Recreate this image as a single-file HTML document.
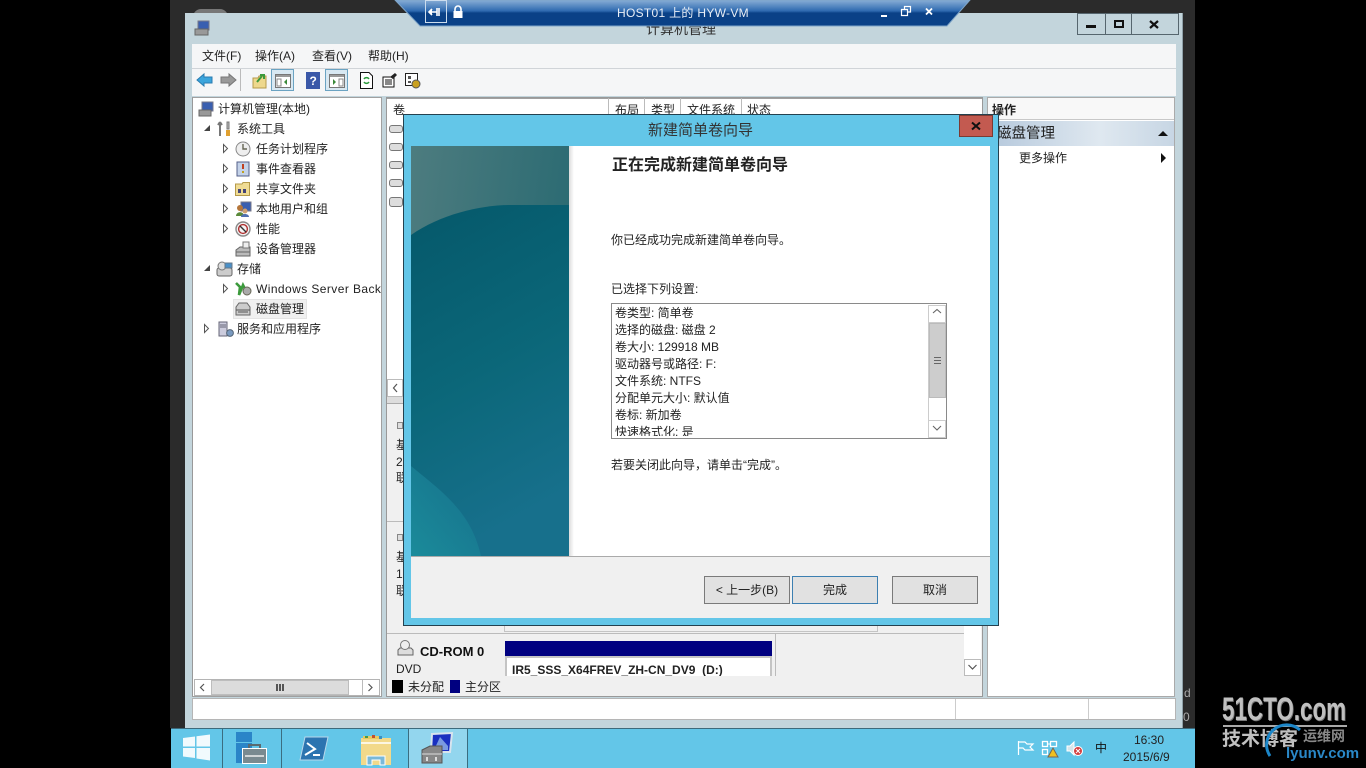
<!DOCTYPE html>
<html><head><meta charset="utf-8"><style>
html,body{margin:0;padding:0;background:#000;width:1366px;height:768px;overflow:hidden}
body{position:relative;font-family:"Liberation Sans","Noto Sans CJK SC",sans-serif;font-size:12px;color:#222}
.a{position:absolute}
.t{position:absolute;white-space:nowrap;line-height:16px;height:16px}
svg{position:absolute;overflow:visible}
.btn{position:absolute;top:576px;height:28px;line-height:26px;text-align:center;background:#e1e1e1;border:1px solid #7a7a7a;box-sizing:border-box}
.tri{position:absolute;width:0;height:0}
</style></head><body>
<div class="a" style="left:170px;top:0;width:1025px;height:728px;background:#2b2b2b"></div>
<div class="a" style="left:193px;top:9px;width:35px;height:8px;background:#777;border-radius:8px 8px 0 0"></div>
<div class="a" style="left:185px;top:13px;width:998px;height:715px;background:#c3d5dc"></div>
<div class="a" style="left:1182px;top:13px;width:1px;height:715px;background:#8fa0a8"></div>
<div class="t" style="left:646px;top:21px;font-size:14px;color:#333">计算机管理</div>
<svg style="left:194px;top:20px" width="17" height="17"><rect x="4" y="1" width="11" height="9" fill="#3a5fb0" stroke="#778"/><rect x="1" y="9" width="13" height="6" fill="#999" stroke="#666"/></svg>
<div class="a" style="left:1077px;top:13px;width:102px;height:22px;border:1px solid #56666e;box-sizing:border-box"></div>
<div class="a" style="left:1105px;top:13px;width:1px;height:22px;background:#56666e"></div>
<div class="a" style="left:1131px;top:13px;width:1px;height:22px;background:#56666e"></div>
<div class="a" style="left:1086px;top:25px;width:10px;height:3px;background:#111"></div>
<div class="a" style="left:1114px;top:20px;width:10px;height:8px;border:2px solid #111;box-sizing:border-box"></div>
<svg style="left:1149px;top:20px" width="10" height="9"><path d="M1 1L9 8M9 1L1 8" stroke="#111" stroke-width="2.200"/></svg>

<div class="a" style="left:192px;top:44px;width:984px;height:24px;background:#f5f6f7"></div>
<div class="a" style="left:192px;top:68px;width:984px;height:1px;background:#d0d4d8"></div>
<div class="a" style="left:192px;top:69px;width:984px;height:27px;background:#f5f6f7"></div>
<div class="t" style="left:202px;top:48px">文件(F)</div>
<div class="t" style="left:255px;top:48px">操作(A)</div>
<div class="t" style="left:312px;top:48px">查看(V)</div>
<div class="t" style="left:368px;top:48px">帮助(H)</div>

<svg style="left:196px;top:72px" width="18" height="16"><path d="M1 8L8 2V5H16V11H8V14Z" fill="#3ba5dc" stroke="#2a7cb0"/></svg>
<svg style="left:219px;top:72px" width="18" height="16"><path d="M17 8L10 2V5H2V11H10V14Z" fill="#999" stroke="#777"/></svg>
<div class="a" style="left:240px;top:69px;width:1px;height:22px;background:#bbb"></div>
<svg style="left:252px;top:73px" width="15" height="16"><path d="M1 5H6L7 3H14V15H1Z" fill="#eed88c" stroke="#b59a4a"/><path d="M5 9L10 3M8 2L12 2L12 6" stroke="#3c9a3c" stroke-width="2" fill="none"/></svg>
<div class="a" style="left:271px;top:69px;width:23px;height:22px;background:#d8e8f2;border:1px solid #6ba3c2;box-sizing:border-box"></div>
<svg style="left:275px;top:74px" width="16" height="14"><rect x=".5" y=".5" width="15" height="13" fill="#fff" stroke="#777"/><rect x="1" y="1" width="14" height="2" fill="#999"/><rect x="2" y="5" width="4" height="7" fill="none" stroke="#888"/><path d="M12 5V11L9 8Z" fill="#3a8a3a"/></svg>
<svg style="left:306px;top:72px" width="14" height="17"><rect width="14" height="17" fill="#3a58a8"/><text x="3.500" y="13" fill="#fff" font-size="12" font-weight="bold" font-family="Liberation Sans">?</text></svg>
<div class="a" style="left:325px;top:69px;width:23px;height:22px;background:#d8e8f2;border:1px solid #6ba3c2;box-sizing:border-box"></div>
<svg style="left:329px;top:74px" width="16" height="14"><rect x=".5" y=".5" width="15" height="13" fill="#fff" stroke="#777"/><rect x="1" y="1" width="14" height="2" fill="#999"/><rect x="10" y="5" width="4" height="7" fill="none" stroke="#888"/><path d="M4 5V11L7 8Z" fill="#3a8a3a"/></svg>
<svg style="left:360px;top:72px" width="13" height="17"><path d="M.5.5H9L12.500 4V16.500H.5Z" fill="#fff" stroke="#111"/><path d="M4 7A3 3 0 0 1 9 7M9 10A3 3 0 0 1 4 10" stroke="#2a9a3a" stroke-width="1.500" fill="none"/></svg>
<svg style="left:382px;top:73px" width="16" height="15"><rect x="1" y="4" width="11" height="10" fill="#fff" stroke="#111"/><path d="M3 7H10M3 9H10M3 11H10" stroke="#111"/><path d="M8 4L13 0L15 2L11 6Z" fill="#222"/></svg>
<svg style="left:405px;top:73px" width="16" height="16"><rect x=".5" y=".5" width="12" height="12" fill="#fff" stroke="#222"/><path d="M3 3H6V6H3ZM3 8H6V10H3Z" fill="#555"/><circle cx="11" cy="11" r="4" fill="#c9a020" stroke="#555"/></svg>

<!-- Left tree -->
<div class="a" style="left:192px;top:97px;width:190px;height:600px;background:#fff;border:1px solid #a0a0a0;border-left-color:#999;box-sizing:border-box"></div>
<svg style="left:198px;top:101px" width="16" height="16"><rect x="4" y="1" width="11" height="9" fill="#3a5fb0" stroke="#778"/><rect x="1" y="9" width="12" height="6" fill="#999" stroke="#666"/></svg>
<div class="t" style="left:218px;top:101px">计算机管理(本地)</div>
<div class="tri" style="left:204px;top:125px;border-left:6px solid transparent;border-bottom:6px solid #444"></div>
<svg style="left:217px;top:121px" width="16" height="16"><path d="M3 1V15M3 1L1 4M3 1L5 4" stroke="#777" stroke-width="2" fill="none"/><path d="M10 1H12V8H10Z" fill="#bbb" stroke="#777"/><path d="M9 9H13V15H9Z" fill="#e0a030"/></svg>
<div class="t" style="left:237px;top:121px">系统工具</div>
<svg style="left:235px;top:141px" width="16" height="16"><circle cx="8" cy="8" r="7" fill="#eee" stroke="#888"/><path d="M8 3V8H12" stroke="#665" stroke-width="1.400" fill="none"/></svg>
<div class="t" style="left:256px;top:141px">任务计划程序</div>
<svg style="left:236px;top:161px" width="14" height="16"><rect x="1" y="1" width="12" height="14" fill="#c4d2e8" stroke="#55608a"/><path d="M7 3V8" stroke="#c04020" stroke-width="2"/><rect x="6" y="10" width="2" height="2" fill="#c0a020"/></svg>
<div class="t" style="left:256px;top:161px">事件查看器</div>
<svg style="left:235px;top:182px" width="15" height="14"><path d="M.5 2H7L8 .5H14.500V13.500H.5Z" fill="#f0dc94" stroke="#b59a4a"/><path d="M3 7h3v4H3zM8 7h3v4H8z" fill="#447"/></svg>
<div class="t" style="left:256px;top:181px">共享文件夹</div>
<svg style="left:235px;top:201px" width="16" height="16"><rect x="6" y="1" width="10" height="9" fill="#3a5fb0" stroke="#778"/><circle cx="5" cy="7" r="3" fill="#b5763a"/><path d="M1 15C1 10 9 10 9 15Z" fill="#5a8a3a"/><circle cx="10" cy="10" r="2.500" fill="#d0a070"/><path d="M6 16C6 12 14 12 14 16Z" fill="#5070b0"/></svg>
<div class="t" style="left:256px;top:201px">本地用户和组</div>
<svg style="left:235px;top:221px" width="16" height="16"><circle cx="8" cy="8" r="7" fill="#f4f4f4" stroke="#888" stroke-width="1.400"/><circle cx="8" cy="8" r="4.400" fill="none" stroke="#b03030" stroke-width="1.400"/><path d="M5 5L11 11" stroke="#333" stroke-width="1.400"/></svg>
<div class="t" style="left:256px;top:221px">性能</div>
<svg style="left:235px;top:241px" width="16" height="16"><path d="M1 9L5 6H15V15H1Z" fill="#bbb" stroke="#666"/><path d="M1 11H15" stroke="#666"/><rect x="8" y="1" width="6" height="6" fill="#eee" stroke="#777"/></svg>
<div class="t" style="left:256px;top:241px">设备管理器</div>
<div class="tri" style="left:204px;top:265px;border-left:6px solid transparent;border-bottom:6px solid #444"></div>
<svg style="left:216px;top:261px" width="17" height="16"><rect x="1" y="7" width="15" height="8" rx="2" fill="#ccc" stroke="#666"/><circle cx="6" cy="5" r="4" fill="#ddd" stroke="#777"/><rect x="9" y="2" width="7" height="5" fill="#4a90c8" stroke="#678"/></svg>
<div class="t" style="left:237px;top:261px">存储</div>
<svg style="left:235px;top:281px" width="16" height="16"><path d="M1 2L5 6L4 14L8 4L11 10" stroke="#3c9a3c" stroke-width="2.600" fill="none"/><circle cx="12" cy="10" r="4" fill="#aaa" stroke="#665"/></svg>
<div class="t" style="left:256px;top:281px;width:125px;overflow:hidden;letter-spacing:.42px">Windows Server Backup</div>
<div class="a" style="left:233px;top:299px;width:74px;height:20px;background:#f0f0f0;border:1px solid #e4e4e4;box-sizing:border-box"></div>
<svg style="left:235px;top:301px" width="16" height="16"><path d="M1 6L4 2H12L15 6V14H1Z" fill="#ccc" stroke="#666"/><path d="M1 9H15M3 11H13" stroke="#555"/></svg>
<div class="t" style="left:256px;top:301px">磁盘管理</div>
<svg style="left:218px;top:321px" width="16" height="16"><rect x="1" y="1" width="8" height="14" fill="#ccd" stroke="#667"/><path d="M2 4H8M2 6H8" stroke="#667"/><circle cx="12" cy="12" r="3.400" fill="#7a9ac0" stroke="#567"/></svg>
<div class="t" style="left:237px;top:321px">服务和应用程序</div>
<svg style="left:0;top:0" width="400" height="340">
<g fill="#fff" stroke="#555"><path d="M223.500 144.500L227.500 148.500L223.500 152.500Z"/><path d="M223.500 164.500L227.500 168.500L223.500 172.500Z"/><path d="M223.500 184.500L227.500 188.500L223.500 192.500Z"/><path d="M223.500 204.500L227.500 208.500L223.500 212.500Z"/><path d="M223.500 224.500L227.500 228.500L223.500 232.500Z"/><path d="M223.500 284.500L227.500 288.500L223.500 292.500Z"/><path d="M204.500 324.500L208.500 328.500L204.500 332.500Z"/></g></svg>
<!-- left hscroll -->
<div class="a" style="left:194px;top:679px;width:186px;height:17px;background:#fff;border:1px solid #b4b4b4;box-sizing:border-box"></div>
<div class="a" style="left:211px;top:680px;width:138px;height:15px;background:#dcdcdc;border:1px solid #bdbdbd;box-sizing:border-box"></div>
<div class="a" style="left:362px;top:680px;width:1px;height:15px;background:#bbb"></div>
<div class="a" style="left:276px;top:684px;width:8px;height:7px;background:repeating-linear-gradient(90deg,#555 0 2px,transparent 2px 3px)"></div>
<svg style="left:0;top:0" width="400" height="700"><path d="M204 684L200.500 687.500L204 691M368.500 684L372 687.500L368.500 691" fill="none" stroke="#555" stroke-width="1.200"/></svg>

<!-- Middle -->
<div class="a" style="left:386px;top:97px;width:597px;height:600px;background:#f0f0f0;border:1px solid #999;box-sizing:border-box"></div>
<div class="a" style="left:387px;top:98px;width:595px;height:22px;background:#fff"></div>
<div class="a" style="left:387px;top:98px;width:595px;height:1px;background:#a0a0a0"></div>
<div class="t" style="left:393px;top:102px">卷</div>
<div class="a" style="left:608px;top:98px;width:1px;height:20px;background:#bbb"></div>
<div class="a" style="left:644px;top:98px;width:1px;height:20px;background:#bbb"></div>
<div class="a" style="left:680px;top:98px;width:1px;height:20px;background:#bbb"></div>
<div class="a" style="left:741px;top:98px;width:1px;height:20px;background:#bbb"></div>
<div class="t" style="left:615px;top:102px">布局</div>
<div class="t" style="left:651px;top:102px">类型</div>
<div class="t" style="left:687px;top:102px">文件系统</div>
<div class="t" style="left:747px;top:102px">状态</div>
<div class="a" style="left:387px;top:119px;width:20px;height:260px;background:#fff"></div>
<div class="a" style="left:389px;top:125px;width:14px;height:8px;background:#ddd;border:1px solid #777;border-radius:3px;box-sizing:border-box"></div>
<div class="a" style="left:389px;top:143px;width:14px;height:8px;background:#ddd;border:1px solid #777;border-radius:3px;box-sizing:border-box"></div>
<div class="a" style="left:389px;top:161px;width:14px;height:8px;background:#ddd;border:1px solid #777;border-radius:3px;box-sizing:border-box"></div>
<div class="a" style="left:389px;top:179px;width:14px;height:8px;background:#ddd;border:1px solid #777;border-radius:3px;box-sizing:border-box"></div>
<div class="a" style="left:389px;top:197px;width:14px;height:10px;background:#ddd;border:1px solid #777;border-radius:3px;box-sizing:border-box"></div>
<div class="a" style="left:387px;top:379px;width:16px;height:18px;background:#fff;border:1px solid #bbb;box-sizing:border-box"></div>
<svg style="left:0;top:0" width="400" height="400"><path d="M397 384L393.500 388L397 392" fill="none" stroke="#555" stroke-width="1.200"/></svg>
<div class="a" style="left:387px;top:397px;width:16px;height:6px;background:#ddd"></div>
<div class="a" style="left:387px;top:403px;width:16px;height:1px;background:#aaa"></div>
<div class="a" style="left:387px;top:404px;width:16px;height:116px;background:#f0f0f0"></div>
<div class="a" style="left:397px;top:422px;width:6px;height:7px;background:#ddd;border:1px solid #888;box-sizing:border-box"></div>
<div class="t" style="left:396px;top:437px;width:7px;overflow:hidden">基</div>
<div class="t" style="left:396px;top:454px;width:7px;overflow:hidden">2</div>
<div class="t" style="left:396px;top:470px;width:7px;overflow:hidden">联</div>
<div class="a" style="left:387px;top:521px;width:16px;height:1px;background:#bbb"></div>
<div class="a" style="left:397px;top:534px;width:6px;height:7px;background:#ddd;border:1px solid #888;box-sizing:border-box"></div>
<div class="t" style="left:396px;top:549px;width:7px;overflow:hidden">基</div>
<div class="t" style="left:396px;top:566px;width:7px;overflow:hidden">1</div>
<div class="t" style="left:396px;top:583px;width:7px;overflow:hidden">联</div>
<div class="a" style="left:387px;top:633px;width:577px;height:1px;background:#bbb"></div>
<div class="a" style="left:504px;top:625px;width:374px;height:7px;background:#f0f0f0;border:1px solid #c4c4c4;border-top:0;box-sizing:border-box"></div>
<svg style="left:397px;top:640px" width="17" height="16"><path d="M1 10L3 8H14L16 10V15H1Z" fill="#ddd" stroke="#666"/><circle cx="8" cy="5" r="4.500" fill="#eee" stroke="#777"/></svg>
<div class="t" style="left:420px;top:644px;font-weight:bold;font-size:13px;color:#111">CD-ROM 0</div>
<div class="t" style="left:396px;top:661px">DVD</div>
<div class="a" style="left:505px;top:641px;width:267px;height:15px;background:#000080"></div>
<div class="a" style="left:505px;top:656px;width:267px;height:22px;background:#fff;border:2px solid #c4c4c4;border-bottom:0;box-sizing:border-box"></div>
<div class="t" style="left:512px;top:662px;font-weight:bold;color:#222">IR5_SSS_X64FREV_ZH-CN_DV9&nbsp; (D:)</div>
<div class="a" style="left:775px;top:634px;width:1px;height:44px;background:#bbb"></div>
<div class="a" style="left:964px;top:120px;width:17px;height:557px;background:#fff"></div>
<div class="a" style="left:964px;top:659px;width:17px;height:17px;background:#fff;border:1px solid #bbb;box-sizing:border-box"></div>
<svg style="left:0;top:0" width="990" height="680"><path d="M968.500 665L972.500 669L976.500 665" fill="none" stroke="#555" stroke-width="1.200"/></svg>
<div class="a" style="left:387px;top:676px;width:595px;height:20px;background:#f0f0f0"></div>
<div class="a" style="left:392px;top:680px;width:11px;height:13px;background:#000"></div>
<div class="t" style="left:408px;top:679px">未分配</div>
<div class="a" style="left:450px;top:680px;width:10px;height:13px;background:#000080"></div>
<div class="t" style="left:465px;top:679px">主分区</div>

<!-- Right -->
<div class="a" style="left:987px;top:97px;width:188px;height:600px;background:#fff;border:1px solid #aaa;box-sizing:border-box"></div>
<div class="a" style="left:988px;top:98px;width:186px;height:22px;background:#f8f8f8;border-bottom:1px solid #c8c8c8;box-sizing:border-box"></div>
<div class="t" style="left:992px;top:102px;font-weight:bold">操作</div>
<div class="a" style="left:988px;top:121px;width:186px;height:25px;background:linear-gradient(90deg,#b5c8dc,#dfe8f0 60%,#c7d6e4)"></div>
<div class="t" style="left:997px;top:126px;font-size:14.500px">磁盘管理</div>
<div class="tri" style="left:1158px;top:131px;border-left:5px solid transparent;border-right:5px solid transparent;border-bottom:5px solid #111"></div>
<div class="t" style="left:1019px;top:150px">更多操作</div>
<div class="tri" style="left:1161px;top:153px;border-top:5px solid transparent;border-bottom:5px solid transparent;border-left:5px solid #111"></div>

<!-- Status -->
<div class="a" style="left:192px;top:698px;width:984px;height:22px;background:#fff;border:1px solid #b5b5b5;box-sizing:border-box"></div>
<div class="a" style="left:955px;top:699px;width:1px;height:20px;background:#ccc"></div>
<div class="a" style="left:1088px;top:699px;width:1px;height:20px;background:#ccc"></div>

<!-- RDP bar -->
<svg style="left:394px;top:0" width="578" height="28"><defs><linearGradient id="rg" x1="0" y1="0" x2="0" y2="1"><stop offset="0" stop-color="#88aed6"/><stop offset=".42" stop-color="#2f6ab0"/><stop offset=".5" stop-color="#0a4187"/><stop offset="1" stop-color="#0a4187"/></linearGradient></defs><path d="M1 0L26 26H553L576 0Z" fill="url(#rg)" stroke="#7fa5c8"/></svg>
<div class="a" style="left:425px;top:0;width:22px;height:23px;border:1px solid #cde;box-sizing:border-box"></div>
<svg style="left:429px;top:6px" width="14" height="12"><path d="M1 6H8M8 2V10M10 2V10M3 3L0 6L3 9" fill="#fff" stroke="#fff" stroke-width="1.600"/></svg>
<svg style="left:452px;top:5px" width="12" height="13"><path d="M3 6V4A3 3 0 0 1 9 4V6" fill="none" stroke="#fff" stroke-width="1.600"/><rect x="1.500" y="6" width="9" height="7" fill="#fff"/></svg>
<div class="t" style="left:617px;top:5px;color:#e8eef6;font-size:12px;letter-spacing:.3px">HOST01 上的 HYW-VM</div>
<div class="a" style="left:881px;top:15px;width:6px;height:2px;background:#fff"></div>
<svg style="left:901px;top:6px" width="11" height="11"><path d="M3.500 3V.5H9.500V6H7M.5 3.500H6.500V9.500H.5Z" fill="none" stroke="#fff" stroke-width="1.200"/></svg>
<svg style="left:925px;top:8px" width="8" height="7"><path d="M1 .5L7 6.500M7 .5L1 6.500" stroke="#fff" stroke-width="1.800"/></svg>

<!-- Dialog -->
<div class="a" style="left:403px;top:114px;width:596px;height:512px;background:#63c6e8;border:1px solid #24414f;box-sizing:border-box"></div>
<div class="t" style="left:648px;top:122px;font-size:15px;line-height:17px;height:17px;color:#333">新建简单卷向导</div>
<div class="a" style="left:959px;top:115px;width:34px;height:22px;background:#c35a50;border:1px solid #7c3a32;box-sizing:border-box"></div>
<svg style="left:971px;top:122px" width="10" height="8"><path d="M1 .5L9 7.500M9 .5L1 7.500" stroke="#111" stroke-width="2"/></svg>
<div class="a" style="left:411px;top:146px;width:579px;height:472px;background:#fff"></div>
<svg style="left:411px;top:146px" width="158" height="410" viewBox="0 0 158 410"><defs>
<linearGradient id="g1" x1="0" y1="0" x2="1" y2=".35"><stop offset="0" stop-color="#4d7c7f"/><stop offset="1" stop-color="#2a6a72"/></linearGradient>
<linearGradient id="g2" x1="0" y1="0" x2=".25" y2="1"><stop offset="0" stop-color="#05586a"/><stop offset=".55" stop-color="#0b6779"/><stop offset="1" stop-color="#17708c"/></linearGradient>
<linearGradient id="g3" x1="0" y1="1" x2="1" y2="0"><stop offset="0" stop-color="#1b8e9c"/><stop offset="1" stop-color="#17708c"/></linearGradient></defs>
<rect width="158" height="410" fill="url(#g1)"/>
<path d="M0 89C30 68 70 59 100 59H158V410H0Z" fill="url(#g2)"/>
<path d="M0 320C30 345 60 365 70 410H0Z" fill="url(#g3)" opacity=".9"/></svg>
<div class="a" style="left:569px;top:146px;width:5px;height:410px;background:linear-gradient(90deg,#dcdcdc,#fff)"></div>
<div class="t" style="left:612px;top:156px;font-size:16px;line-height:20px;height:20px;font-weight:bold;color:#222">正在完成新建简单卷向导</div>
<div class="t" style="left:611px;top:232px">你已经成功完成新建简单卷向导。</div>
<div class="t" style="left:611px;top:281px">已选择下列设置:</div>
<div class="a" style="left:611px;top:303px;width:336px;height:136px;background:#fff;border:1px solid #8a8a8a;box-sizing:border-box;overflow:hidden">
<div style="position:absolute;left:3px;top:1px;height:131px;overflow:hidden;line-height:17px;white-space:nowrap">卷类型: 简单卷<br>选择的磁盘: 磁盘 2<br>卷大小: 129918 MB<br>驱动器号或路径: F:<br>文件系统: NTFS<br>分配单元大小: 默认值<br>卷标: 新加卷<br>快速格式化: 是</div>
<div class="a" style="left:316px;top:1px;width:18px;height:133px;background:#fff;border-left:1px solid #ccc;box-sizing:border-box"></div>
<div class="a" style="left:316px;top:1px;width:18px;height:18px;background:#fff;border:1px solid #ccc;box-sizing:border-box"></div>
<div class="a" style="left:317px;top:19px;width:17px;height:75px;background:#cdcdcd;border:1px solid #bbb;box-sizing:border-box"></div>
<div class="a" style="left:322px;top:53px;width:7px;height:7px;background:repeating-linear-gradient(180deg,#666 0 1px,transparent 1px 3px)"></div>
<div class="a" style="left:316px;top:116px;width:18px;height:18px;background:#fff;border:1px solid #ccc;box-sizing:border-box"></div>
<svg style="left:0;top:0" width="334" height="134"><path d="M321 9L325 5.500L329 9M321 122L325 126L329 122" fill="none" stroke="#666" stroke-width="1.100"/></svg>
</div>
<div class="t" style="left:611px;top:457px">若要关闭此向导，请单击“完成”。</div>
<div class="a" style="left:411px;top:556px;width:579px;height:62px;background:#f0f0f0;border-top:1px solid #aaa;box-sizing:border-box"></div>
<div class="btn" style="left:704px;width:86px">&lt; 上一步(B)</div>
<div class="btn" style="left:792px;width:86px;border-color:#3c7fb1">完成</div>
<div class="btn" style="left:892px;width:86px">取消</div>

<!-- Taskbar -->
<div class="a" style="left:171px;top:728px;width:1024px;height:40px;background:#63c6e8;border-top:1px solid #3d6a7c;box-sizing:border-box"></div>
<div class="a" style="left:222px;top:729px;width:1px;height:39px;background:#3b6d80"></div>
<div class="a" style="left:281px;top:729px;width:1px;height:39px;background:#3b6d80"></div>
<div class="a" style="left:408px;top:729px;width:60px;height:39px;background:#93d6ee;border-left:1px solid #3b6d80;border-right:1px solid #3b6d80;box-sizing:border-box"></div>
<svg style="left:183px;top:734px" width="27" height="27"><path d="M0 4L12 2.500V12.500H0ZM13.500 2.300L27 .5V12.500H13.500ZM0 14H12V24L0 22.500ZM13.500 14H27V26.500L13.500 24.500Z" fill="#f1fafd"/></svg>
<svg style="left:235px;top:731px" width="34" height="34"><rect x="1" y="1" width="16" height="10" fill="#2a85c8"/><rect x="1" y="12" width="16" height="20" fill="#2a85c8"/><path d="M7 17H32V33H7Z" fill="#fff"/><path d="M8 18H31V32H8Z" fill="#7a8a90"/><path d="M14 17V14H25V17" fill="none" stroke="#5a6a70" stroke-width="2"/><path d="M10 25H29" stroke="#eee" stroke-width="1.500"/></svg>
<svg style="left:299px;top:736px" width="30" height="26"><path d="M6 1H29L24 24H1Z" fill="#2c74b0" stroke="#b9d7ea"/><path d="M8 7L16 13L6 19M14 19H21" fill="none" stroke="#fff" stroke-width="2"/></svg>
<svg style="left:360px;top:733px" width="33" height="32"><path d="M1 5H31V32H1Z" fill="#f2d98a"/><path d="M3 3H20L22 6H3Z" fill="#e8c860"/><rect x="5" y="3" width="3" height="2" fill="#4a9a4a"/><rect x="12" y="2" width="3" height="3" fill="#c05030"/><rect x="19" y="3" width="3" height="3" fill="#3a90c0"/><path d="M1 10H31" stroke="#fff" stroke-width="1.500"/><path d="M7 32V23H25V32H20V27H12V32Z" fill="#7ab8d8" stroke="#fff"/></svg>
<svg style="left:420px;top:732px" width="35" height="33"><path d="M12 2L32 1L30 20L11 20Z" fill="#1a30c0" stroke="#d8e4ee" stroke-width="2"/><path d="M20 5L28 14V18H14Z" fill="#7a9ae0"/><path d="M2 18L10 14H22V31H2Z" fill="#888" stroke="#555"/><path d="M2 22H22" stroke="#ddd"/><rect x="6" y="25" width="2" height="4" fill="#ddd"/><rect x="15" y="25" width="2" height="4" fill="#ddd"/></svg>
<svg style="left:1017px;top:740px" width="18" height="16"><path d="M1.500 1V15M1.500 2H8L10 4H16L13 7L16 10H8L6 8H1.500" fill="#63c6e8" stroke="#fff" stroke-width="1.200"/></svg>
<svg style="left:1041px;top:740px" width="19" height="18"><rect x="1.500" y="1.500" width="5" height="5" fill="none" stroke="#fff" stroke-width="1.300"/><rect x="9.500" y="1.500" width="6" height="5" fill="none" stroke="#fff" stroke-width="1.300"/><rect x="1.500" y="9.500" width="5" height="5" fill="none" stroke="#fff" stroke-width="1.300"/><path d="M6 4H10" stroke="#fff"/><path d="M12 8L7 17H17Z" fill="#f0c020" stroke="#765"/></svg>
<svg style="left:1066px;top:741px" width="19" height="16"><path d="M1 5H4L8 1V14L4 10H1Z" fill="#d5e5ea" stroke="#fff"/><circle cx="12" cy="10" r="4.500" fill="#d44040" stroke="#fff"/><path d="M10 8L14 12M14 8L10 12" stroke="#fff"/></svg>
<div class="t" style="left:1095px;top:740px;font-size:12px;color:#111">中</div>
<div class="t" style="left:1134px;top:732px;color:#222">16:30</div>
<div class="t" style="left:1123px;top:749px;color:#222">2015/6/9</div>

<!-- right clipped chars -->
<div class="t" style="left:1184px;top:685px;width:7px;overflow:hidden;color:#aaa">d</div>
<div class="t" style="left:1183px;top:709px;width:7px;overflow:hidden;color:#aaa">0</div>

<!-- Watermark -->
<div class="t" style="left:1222px;top:691px;font-size:32px;font-weight:bold;line-height:36px;height:36px;color:#c0c0c0;transform:scaleX(.7);transform-origin:left;text-shadow:1px 1px 0 #777">51CTO.com</div>
<div class="a" style="left:1223px;top:725px;width:124px;height:2px;background:#aaa"></div>
<div class="t" style="left:1222px;top:729px;font-size:19px;font-weight:bold;line-height:22px;height:22px;color:#c0c0c0">技术博客</div>
<div class="t" style="left:1303px;top:728px;font-size:14px;font-weight:bold;line-height:16px;color:#888">运维网</div>
<svg style="left:1260px;top:722px" width="50" height="46"><path d="M10 34A20 20 0 0 1 40 8" fill="none" stroke="#1c86c8" stroke-width="3"/></svg>
<div class="t" style="left:1286px;top:745px;font-size:15px;font-weight:bold;color:#2a88c8;line-height:18px;height:18px">lyunv.com</div>
</body></html>
